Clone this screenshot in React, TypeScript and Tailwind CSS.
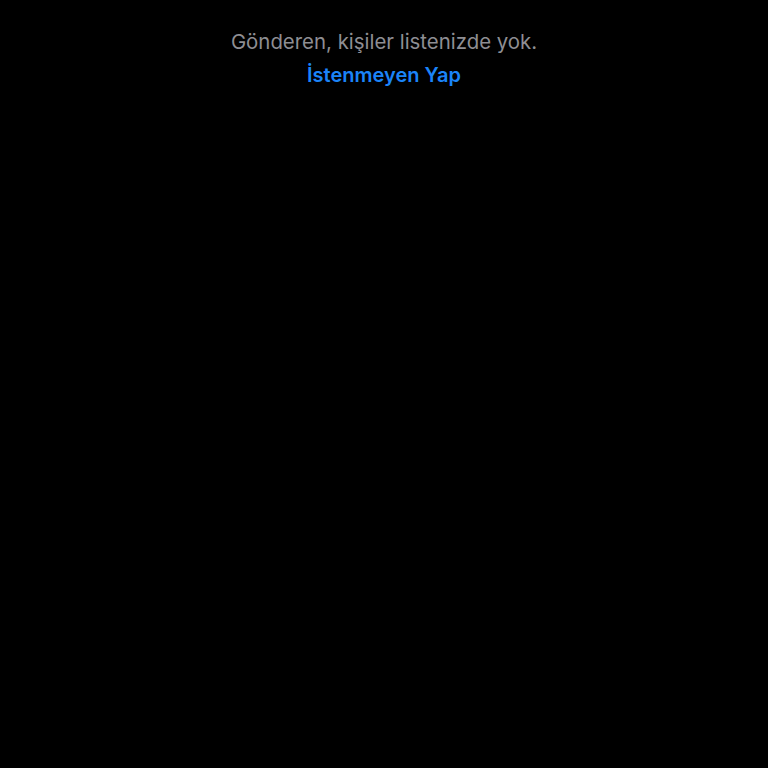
export default function App() {
  return (
    <div
      className="w-full h-[768px] bg-black flex flex-col items-center pt-[29px]"
      style={{ fontFamily: 'Inter, "Liberation Sans", sans-serif' }}
    >
      <p className="text-[20.4px] leading-[26px] text-[#8e8e93]">Gönderen, kişiler listenizde yok.</p>
      <button className="mt-[7px] text-[20px] leading-[26px] font-semibold text-[#1b84f8]">
        İstenmeyen Yap
      </button>
    </div>
  );
}
